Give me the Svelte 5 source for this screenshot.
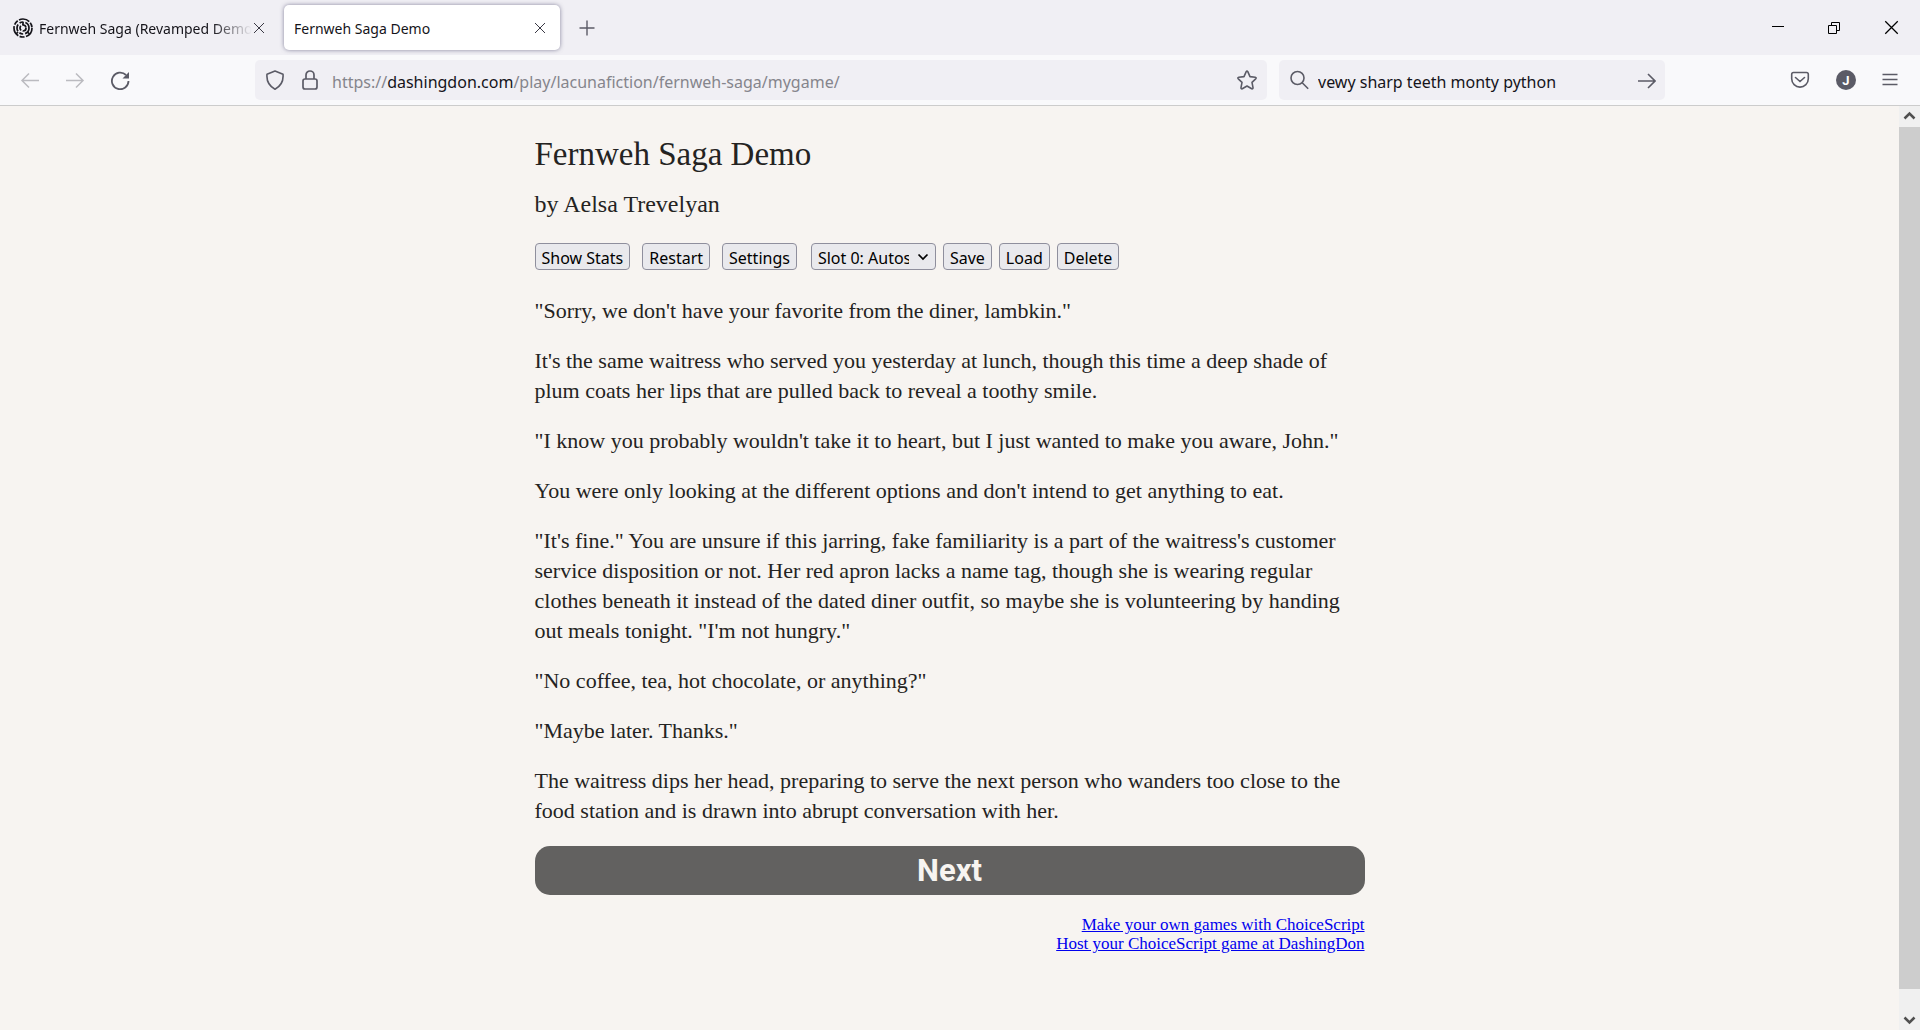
<script>
	let search = $state('vewy sharp teeth monty python');
	let slot = $state('0');

	const paragraphs = [
		`"Sorry, we don't have your favorite from the diner, lambkin."`,
		`It's the same waitress who served you yesterday at lunch, though this time a deep shade of plum coats her lips that are pulled back to reveal a toothy smile.`,
		`"I know you probably wouldn't take it to heart, but I just wanted to make you aware, John."`,
		`You were only looking at the different options and don't intend to get anything to eat.`,
		`"It's fine." You are unsure if this jarring, fake familiarity is a part of the waitress's customer service disposition or not. Her red apron lacks a name tag, though she is wearing regular clothes beneath it instead of the dated diner outfit, so maybe she is volunteering by handing out meals tonight. "I'm not hungry."`,
		`"No coffee, tea, hot chocolate, or anything?"`,
		`"Maybe later. Thanks."`,
		`The waitress dips her head, preparing to serve the next person who wanders too close to the food station and is drawn into abrupt conversation with her.`
	];
</script>

{#snippet cross(size)}
	<svg width={size} height={size} viewBox="0 0 12 12" fill="none" stroke="currentColor" stroke-width="1">
		<path d="M1 1l10 10M11 1l-10 10" />
	</svg>
{/snippet}

<div class="window">
	<header class="tabs">
		<div class="tab first">
			<svg class="favicon" width="20" height="20" viewBox="0 0 20 20" fill="none" stroke="#15141a" stroke-width="1.7">
				<circle cx="10" cy="10" r="9" stroke-dasharray="11 1.5 5 1.5" />
				<circle cx="10" cy="10" r="6" stroke-dasharray="7 2 4 2" />
				<circle cx="10" cy="10" r="3" stroke-dasharray="5 1.5" />
				<path d="M10 4v3M5 14l-2 2M14.5 14l2 2" />
			</svg>
			<span class="tab-label fade">Fernweh Saga (Revamped Demo</span>
			<button class="icon close" aria-label="Close tab">{@render cross(12)}</button>
		</div>
		<div class="tab active">
			<span class="tab-label">Fernweh Saga Demo</span>
			<button class="icon close" aria-label="Close tab">{@render cross(12)}</button>
		</div>
		<button class="icon plus" aria-label="New tab">
			<svg width="16" height="16" viewBox="0 0 16 16" stroke="#5b5b66" stroke-width="1.4"><path d="M8 0.5v15M0.5 8h15" /></svg>
		</button>
		<div class="window-buttons">
			<button class="icon" aria-label="Minimize">
				<svg width="12" height="12" viewBox="0 0 12 12" stroke="#000"><path d="M0 4.5h12" /></svg>
			</button>
			<button class="icon" aria-label="Restore">
				<svg width="12" height="12" viewBox="0 0 12 12" fill="none" stroke="#000"><path d="M0.5 3.5h8v8h-8zM3.5 3.5v-3h8v8h-3" /></svg>
			</button>
			<button class="icon" aria-label="Close">{@render cross(15)}</button>
		</div>
	</header>

	<nav class="toolbar">
		<div class="nav-buttons">
			<button class="icon dim" aria-label="Back">
				<svg width="20" height="20" viewBox="0 0 20 20" fill="none" stroke="currentColor" stroke-width="1.5"><path d="M19 10.5H2M9 3.5L2 10.5L9 17.5" /></svg>
			</button>
			<button class="icon dim" aria-label="Forward">
				<svg width="20" height="20" viewBox="0 0 20 20" fill="none" stroke="currentColor" stroke-width="1.5"><path d="M1 10.5h17M11 3.5l7 7l-7 7" /></svg>
			</button>
			<button class="icon" aria-label="Reload">
				<svg width="20" height="20" viewBox="0 0 20 20" fill="none" stroke="currentColor" stroke-width="1.8">
					<path d="M18.5 11A8.3 8.3 0 1 1 16 5" />
					<path d="M19 2v6.5h-6.5z" fill="currentColor" stroke="none" />
				</svg>
			</button>
		</div>

		<div class="urlbar">
			<svg width="20" height="20" viewBox="0 0 20 20" fill="none" stroke="currentColor" stroke-width="1.6" stroke-linejoin="round">
				<path d="M10 1l8 3.2c.6 6.3-2 11.8-8 15c-6-3.2-8.6-8.7-8-15z" />
			</svg>
			<svg width="20" height="20" viewBox="0 0 20 20" fill="none" stroke="currentColor" stroke-width="1.7">
				<rect x="3" y="9" width="14" height="10" rx="2" />
				<path d="M6 9V5a4 4 0 0 1 8 0v4" />
			</svg>
			<a class="url" href="https://dashingdon.com/play/lacunafiction/fernweh-saga/mygame/">https://<b>dashingdon.com</b>/play/lacunafiction/fernweh-saga/mygame/</a>
			<button class="icon" aria-label="Bookmark this page">
				<svg width="20" height="20" viewBox="0 0 20 20" fill="none" stroke="currentColor" stroke-width="1.6" stroke-linejoin="round">
					<path d="M9.2 1.6q.8-1.2 1.6 0l2.2 5l5.2.6q1.5.4.5 1.6l-3.7 3.5l1 5.4q0 1.5-1.3 1.1L10 16l-4.7 2.8q-1.3.4-1.3-1.1l1-5.4l-3.7-3.5q-1-1.2.5-1.6l5.2-.6z" />
				</svg>
			</button>
		</div>

		<div class="searchbar">
			<svg width="20" height="20" viewBox="0 0 20 20" fill="none" stroke="currentColor" stroke-width="1.6">
				<circle cx="8.5" cy="8" r="6.5" /><path d="M13.2 12.7l6 6" />
			</svg>
			<input aria-label="Search" bind:value={search} />
			<button class="icon" aria-label="Go">
				<svg width="20" height="20" viewBox="0 0 20 20" fill="none" stroke="currentColor" stroke-width="1.6"><path d="M2 11h17M12 4l7 7l-7 7" /></svg>
			</button>
		</div>

		<div class="tools">
			<button class="icon" aria-label="Save to Pocket">
				<svg width="20" height="20" viewBox="0 0 20 20" fill="none" stroke="currentColor" stroke-width="1.6" stroke-linecap="round">
					<path d="M3.5 2.5h13a1.8 1.8 0 0 1 1.8 1.8v4.5a8.3 8.3 0 0 1-16.6 0V4.3a1.8 1.8 0 0 1 1.8-1.8z" />
					<path d="M5.5 7.5l4.5 4l4.5-4" />
				</svg>
			</button>
			<button class="icon avatar" aria-label="Account">J</button>
			<button class="icon" aria-label="Menu">
				<svg width="16" height="16" viewBox="0 0 16 16" stroke="currentColor" stroke-width="1.4"><path d="M0.5 2.5h15M0.5 7.5h15M0.5 12.5h15" /></svg>
			</button>
		</div>
	</nav>

	<div class="viewport">
		<main class="container">
			<h1>Fernweh Saga Demo</h1>
			<h2>by Aelsa Trevelyan</h2>

			<div class="controls">
				<div class="main-controls">
					<button>Show Stats</button>
					<button>Restart</button>
					<button>Settings</button>
				</div>
				<div class="save-controls">
					<div class="slot">
						<select aria-label="Save slot" bind:value={slot}>
							<option value="0">Slot 0: Autosave</option>
							<option value="1">Slot 1</option>
						</select>
						<svg width="12" height="8" viewBox="0 0 12 8" fill="none" stroke="#000" stroke-width="1.7"><path d="M1.5 1.5L6 6l4.5-4.5" /></svg>
					</div>
					<button>Save</button>
					<button>Load</button>
					<button>Delete</button>
				</div>
			</div>

			{#each paragraphs as text}
				<p>{text}</p>
			{/each}

			<button class="next">Next</button>

			<footer>
				<a href="https://www.choiceofgames.com/make-your-own-games/choicescript-intro/">Make your own games with ChoiceScript</a>
				<a href="https://dashingdon.com">Host your ChoiceScript game at DashingDon</a>
			</footer>
		</main>

		<div class="scrollbar">
			<svg width="21" height="21" viewBox="0 0 21 21" fill="none" stroke="#505050" stroke-width="2.5"><path d="M5.5 12.5l5-5l5 5" /></svg>
			<div class="thumb"></div>
			<svg width="21" height="21" viewBox="0 0 21 21" fill="none" stroke="#505050" stroke-width="2.5"><path d="M5.5 8.5l5 5l5-5" /></svg>
		</div>
	</div>
</div>

<style>
	:global(body) {
		background: #f7f4f1;
	}

	.window {
		display: flex;
		flex-direction: column;
		min-height: 100vh;
		font-family: "Noto Sans", "Open Sans", sans-serif;
		color: #15141a;
	}

	svg {
		display: block;
		flex: none;
	}

	.icon {
		display: flex;
		align-items: center;
		justify-content: center;
		flex: none;
		padding: 0;
		border: none;
		background: none;
		color: #5b5b66;
	}

	.tabs {
		display: flex;
		align-items: center;
		height: 55px;
		background: #f0eff4;
	}

	.tab {
		display: flex;
		align-items: center;
		box-sizing: border-box;
		width: 276px;
		height: 45px;
		padding: 0 13px 0 10px;
		border-radius: 5px;
		font-size: 14px;
	}

	.tab.first {
		width: 284px;
		padding-left: 13px;
		padding-right: 18px;
	}

	.tab.active {
		background: #fff;
		box-shadow: 0 0 4px rgba(90, 88, 120, 0.7);
	}

	.favicon {
		margin-right: 6px;
	}

	.tab-label {
		flex: 1;
		padding-top: 2px;
		overflow: hidden;
		white-space: nowrap;
	}

	.fade {
		mask-image: linear-gradient(to left, transparent, #000 40px);
	}

	.close {
		width: 14px;
		color: #3a3944;
	}

	.plus {
		margin-left: 19px;
	}

	.window-buttons {
		display: flex;
		gap: 44px;
		margin-left: auto;
		padding-right: 21px;
	}

	.window-buttons .icon {
		color: #000;
	}

	.toolbar {
		display: flex;
		align-items: center;
		height: 50px;
		border-bottom: 1px solid #ccc;
		background: #f9f9fb;
		color: #5b5b66;
	}

	.nav-buttons {
		display: flex;
		gap: 25px;
		width: 235px;
		padding-left: 20px;
	}

	.dim {
		color: #bbbbc0;
	}

	.urlbar,
	.searchbar {
		display: flex;
		align-items: center;
		box-sizing: border-box;
		height: 40px;
		padding: 0 10px;
		border-radius: 5px;
		background: #f0eff4;
		font-size: 16px;
	}

	.urlbar {
		flex: 1;
		gap: 15px;
	}

	.url {
		flex: 1;
		margin-left: -3px;
		padding-top: 4px;
		color: #85858c;
		text-decoration: none;
	}

	.url b {
		color: #15141a;
		font-weight: 400;
	}

	.searchbar {
		width: 386px;
		margin-left: 12px;
		padding-right: 9px;
		gap: 9px;
	}

	.searchbar input {
		flex: 1;
		min-width: 0;
		padding: 4px 0 0;
		border: none;
		outline: none;
		background: none;
		color: #15141a;
		font: inherit;
	}

	.tools {
		display: flex;
		align-items: center;
		justify-content: flex-end;
		gap: 26px;
		width: 233px;
		padding-right: 22px;
	}

	.avatar {
		width: 20px;
		height: 20px;
		border-radius: 50%;
		background: #5b5b66;
		color: #fff;
		font: bold 13px Roboto, sans-serif;
	}

	.viewport {
		display: flex;
		flex: 1;
	}

	.container {
		box-sizing: border-box;
		width: 100%;
		max-width: 830px;
		margin: 0 auto;
		color: #242322;
		font-family: Georgia, "Liberation Serif", serif;
		font-size: 22px;
		line-height: 30px;
	}

	h1,
	h2 {
		margin: 0;
		font-weight: 400;
	}

	h1 {
		margin-top: 28px;
		font-size: 33px;
		line-height: 40px;
	}

	h2 {
		margin-top: 15px;
		font-size: 24px;
		line-height: 30px;
	}

	.controls {
		display: flex;
		gap: 14px;
		margin: 24px 0 26px;
	}

	.main-controls,
	.save-controls {
		display: flex;
		gap: 12px;
	}

	.save-controls {
		gap: 7px;
	}

	.controls button,
	select {
		box-sizing: border-box;
		height: 27px;
		padding: 2px 6px 0;
		border: 1px solid #8f8f9d;
		border-radius: 4px;
		background-color: #e9e9ed;
		color: #000;
		font: 16px/22px "Noto Sans", sans-serif;
	}

	.slot {
		position: relative;
	}

	.slot svg {
		position: absolute;
		top: 10px;
		right: 7px;
		pointer-events: none;
	}

	.slot select {
		display: block;
		appearance: none;
		width: 125px;
		padding: 2px 26px 0 6px;
	}

	p {
		margin: 0 0 20px;
	}

	.next {
		display: block;
		width: 100%;
		height: 49px;
		padding: 0;
		border: none;
		border-radius: 15px;
		background: #626160;
		color: #f7f4f1;
		font: bold 31px Roboto, sans-serif;
	}

	footer {
		display: flex;
		flex-direction: column;
		align-items: flex-end;
		margin-top: 20px;
		font-size: 17px;
		line-height: 19px;
	}

	footer a {
		color: #0000ee;
	}

	.scrollbar {
		display: flex;
		flex-direction: column;
		width: 21px;
		background: #f0f0f0;
	}

	.thumb {
		flex: 1;
		margin-bottom: 20px;
		background: #cdcdcd;
	}
</style>
